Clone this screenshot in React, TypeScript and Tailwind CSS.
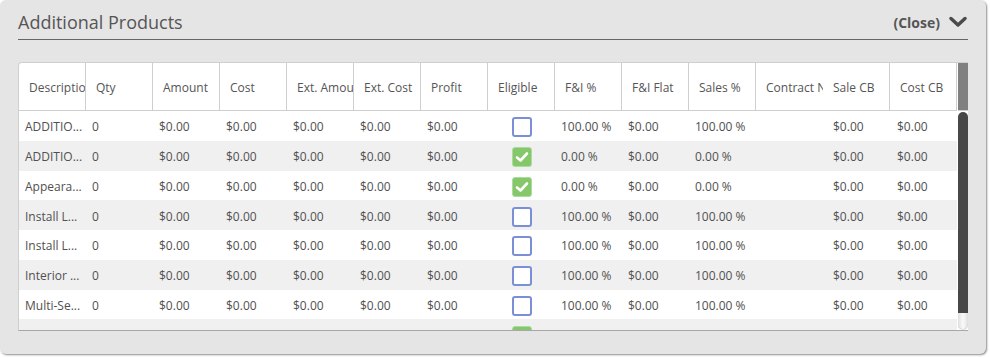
import React from "react";

const columns = [
  "Description",
  "Qty",
  "Amount",
  "Cost",
  "Ext. Amount",
  "Ext. Cost",
  "Profit",
  "Eligible",
  "F&I %",
  "F&I Flat",
  "Sales %",
  "Contract No",
  "Sale CB",
  "Cost CB",
];

type Row = { desc: string; eligible: boolean };

const rows: Row[] = [
  { desc: "ADDITIO...", eligible: false },
  { desc: "ADDITIO...", eligible: true },
  { desc: "Appeara...", eligible: true },
  { desc: "Install L...", eligible: false },
  { desc: "Install L...", eligible: false },
  { desc: "Interior ...", eligible: false },
  { desc: "Multi-Se...", eligible: false },
  { desc: "Tint & S...", eligible: true },
];

function CheckBox({ checked }: { checked: boolean }) {
  if (checked) {
    return (
      <div className="w-[20px] h-[20px] rounded-[3px] bg-[#86c769] border border-[#a9dca0] flex items-center justify-center">
        <svg width="14" height="12" viewBox="0 0 14 12">
          <path d="M2 6.5 L5.5 9.5 L12 2.5" fill="none" stroke="#ffffff" strokeWidth="2.6" strokeLinecap="round" strokeLinejoin="round" />
        </svg>
      </div>
    );
  }
  return <div className="w-[20px] h-[20px] rounded-[3px] bg-white border-2 border-[#7b8fd8]" />;
}

export default function App() {
  return (
    <div className="w-[990px] h-[358px] bg-white" style={{ fontFamily: '"Open Sans", "Liberation Sans", sans-serif' }}>
      <div className="w-[986px] h-[354px] bg-[#e5e5e5] rounded-[6px] shadow-[1px_1px_2px_rgba(0,0,0,0.45)] pl-[18px] pr-[18px]">
        <div className="h-[40px] border-b border-[#666] flex items-center justify-between pt-[5px]">
          <span className="text-[18px] text-[#555]">Additional Products</span>
          <div className="flex items-center gap-[9px] pr-[1px]">
            <span className="text-[14px] font-bold text-[#555]">(Close)</span>
            <svg width="18" height="12" viewBox="0 0 18 12">
              <path d="M2 2.5 L9 9 L16 2.5" fill="none" stroke="#4a4a4a" strokeWidth="3.4" strokeLinecap="round" strokeLinejoin="round" />
            </svg>
          </div>
        </div>

        <div className="mt-[22px] flex bg-white border-t border-l border-[#cfcfcf] rounded-tl-[4px] border-b border-b-[#a8a8a8] overflow-hidden">
          <div className="w-[938px]">
            <div className="flex h-[48px] border-b border-[#cfcfcf]">
              {columns.map((c) => (
                <div
                  key={c}
                  className={`w-[67px] shrink-0 flex items-center whitespace-nowrap overflow-hidden text-[12px] text-[#555] pt-[2px] ${
                    c === "Contract No" ? "pl-[10px]" : "border-r border-[#cfcfcf] pl-[10px]"
                  }`}
                >
                  {c}
                </div>
              ))}
            </div>
            <div className="h-[219px] overflow-hidden">
              {rows.map((r, i) => (
                <div
                  key={i}
                  className={`flex h-[29.75px] items-center pt-[3px] text-[12px] text-[#505050] whitespace-nowrap ${
                    i % 2 === 1 ? "bg-[#f0f0f0]" : "bg-white"
                  }`}
                >
                  <div className="w-[67px] pl-[6px] overflow-hidden">{r.desc}</div>
                  <div className="w-[67px] pl-[6px]">0</div>
                  <div className="w-[67px] pl-[6px]">$0.00</div>
                  <div className="w-[67px] pl-[6px]">$0.00</div>
                  <div className="w-[67px] pl-[6px]">$0.00</div>
                  <div className="w-[67px] pl-[6px]">$0.00</div>
                  <div className="w-[67px] pl-[6px]">$0.00</div>
                  <div className="w-[67px] flex justify-center">
                    <CheckBox checked={r.eligible} />
                  </div>
                  <div className="w-[67px] pl-[6px]">{r.eligible ? "0.00 %" : "100.00 %"}</div>
                  <div className="w-[67px] pl-[6px]">$0.00</div>
                  <div className="w-[67px] pl-[6px]">{r.eligible ? "0.00 %" : "100.00 %"}</div>
                  <div className="w-[67px]" />
                  <div className="w-[67px] pl-[10px]">$0.00</div>
                  <div className="w-[67px] pl-[7px]">$0.00</div>
                </div>
              ))}
            </div>
          </div>
          <div className="w-[12px] flex flex-col items-center bg-white pl-[1px]">
            <div className="w-[10px] h-[48px] bg-[#808080] border-b border-[#cfcfcf]" />
            <div className="w-[10px] h-[219px] flex flex-col pt-[1px]">
              <div className="h-[201px] bg-[#474747] rounded-t-[5px]" />
              <div className="h-[17px] rounded-b-[5px] bg-gradient-to-r from-[#e0e0e0] via-[#fafafa] to-[#e0e0e0] shadow-[inset_0_-1px_1px_rgba(0,0,0,0.1)]" />
            </div>
          </div>
        </div>
      </div>
    </div>
  );
}
